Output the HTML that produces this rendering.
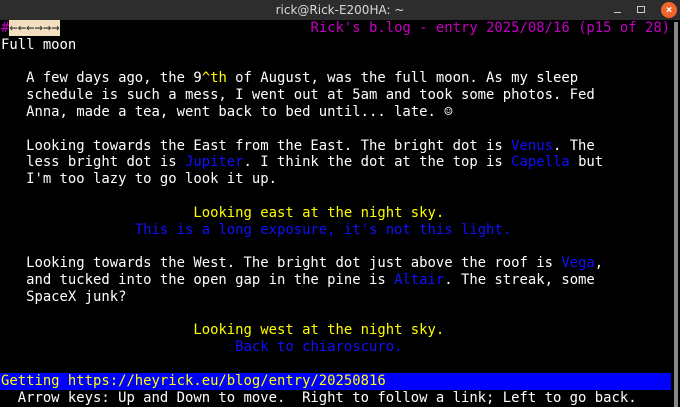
<!DOCTYPE html>
<html><head><meta charset="utf-8"><style>
html,body{margin:0;width:680px;height:407px;background:#000;overflow:hidden}
body{position:relative;font-family:"DejaVu Sans Mono","Liberation Mono",monospace}
#tb{position:absolute;left:0;top:0;width:680px;height:20px;background:#2d2d2d;color:#d8d8d8;font:12px "DejaVu Sans","Liberation Sans",sans-serif;text-align:center;line-height:20px}
#cl{position:absolute;left:661px;top:2px;width:16px;height:16px;border-radius:50%;background:#f0642d;color:#fff;font-size:11px;line-height:16px;text-align:center;font-weight:bold}
#mn{position:absolute;left:637px;top:6px;width:8px;height:7px;border:1px solid #ccc;box-sizing:border-box}
#mi{position:absolute;left:614px;top:12px;width:7px;height:1px;background:#ccc}
pre{position:absolute;left:1px;margin:0;font-size:13.9px;line-height:16.8px;color:#fff;white-space:pre}
.m{color:#c400c4}.y{color:#ffff00}.b{color:#1010ff}
.h{background:#f3dfbf;color:#333}
#bar{position:absolute;left:0;top:373px;width:671px;height:17px;background:#0000ff}
#sb{position:absolute;left:674px;top:22px;width:4px;height:385px;background:#888}
</style></head><body>
<div id="tb">rick@Rick-E200HA: ~</div><div id="mi"></div><div id="mn"></div><div id="cl">×</div>
<div id="bar"></div><div id="sb"></div>
<pre style="top:20px"><span class="m">#</span><span class="h">←←←→→→</span>                              <span class="m">Rick's b.log - entry 2025/08/16 (p15 of 28)</span>
Full moon

   A few days ago, the 9<span class="y">^th</span> of August, was the full moon. As my sleep
   schedule is such a mess, I went out at 5am and took some photos. Fed
   Anna, made a tea, went back to bed until... late. ☺

   Looking towards the East from the East. The bright dot is <span class="b">Venus</span>. The
   less bright dot is <span class="b">Jupiter</span>. I think the dot at the top is <span class="b">Capella</span> but
   I'm too lazy to go look it up.

                       <span class="y">Looking east at the night sky.</span>
                <span class="b">This is a long exposure, it's not this light.</span>

   Looking towards the West. The bright dot just above the roof is <span class="b">Vega</span>,
   and tucked into the open gap in the pine is <span class="b">Altair</span>. The streak, some
   SpaceX junk?

                       <span class="y">Looking west at the night sky.</span>
                            <span class="b">Back to chiaroscuro.</span></pre>
<pre style="top:373px"><span class="y">Getting https://heyrick.eu/blog/entry/20250816</span>
  Arrow keys: Up and Down to move.  Right to follow a link; Left to go back.</pre>
</body></html>
